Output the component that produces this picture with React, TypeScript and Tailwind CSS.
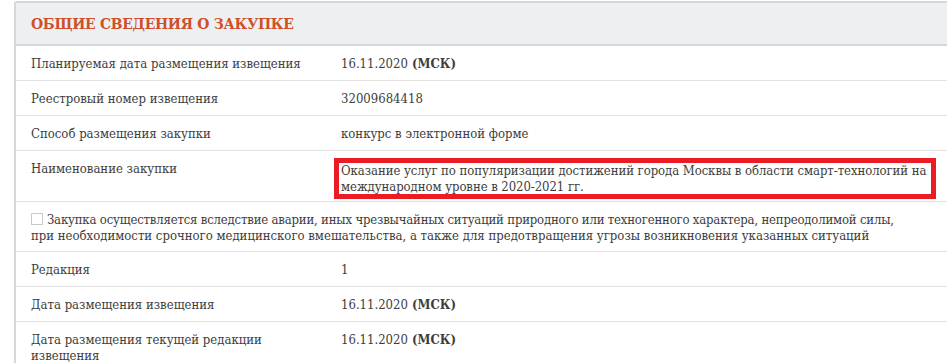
const rows = [
  { label: 'Планируемая дата размещения извещения', value: '16.11.2020', msk: true },
  { label: 'Реестровый номер извещения', value: '32009684418' },
  { label: 'Способ размещения закупки', value: 'конкурс в электронной форме' },
];

const rowsAfter = [
  { label: 'Редакция', value: '1' },
  { label: 'Дата размещения извещения', value: '16.11.2020', msk: true },
  { label: <>Дата размещения текущей редакции<br />извещения</>, value: '16.11.2020', msk: true },
];

function Row({ label, value, msk }: { label: React.ReactNode; value: string; msk?: boolean }) {
  return (
    <div className="flex border-b border-[#e3e3e3] pt-[10px] pb-[8px] leading-[16px]">
      <div className="w-[325px] shrink-0 pl-[15px] pr-[10px]">{label}</div>
      <div className="flex-1">
        {value}
        {msk && <b className="font-bold"> (МСК)</b>}
      </div>
    </div>
  );
}

export default function App() {
  return (
    <div className="w-[947px] h-[363px] overflow-hidden bg-white pt-[1px] pl-[14px]">
      <div
        className="w-[960px] border-t-[2px] border-l-[2px] border-[#d5d7dc] rounded-tl-[3px] text-[13px] text-[#3d3d3d]"
        style={{ fontFamily: '"DejaVu Serif Condensed", "DejaVu Serif", serif' }}
      >
        <div className="bg-[#eeeff1] border-b-[2px] border-[#d5d7dc] h-[43px] flex items-center pl-[15px]">
          <h2 className="text-[15.5px] font-bold uppercase text-[#cf5028] tracking-[-0.3px]">
            Общие сведения о закупке
          </h2>
        </div>

        {rows.map((r, i) => (
          <Row key={i} {...r} />
        ))}

        <div className="flex border-b border-[#e3e3e3] pb-[2px] leading-[16px]">
          <div className="w-[325px] shrink-0 pl-[15px] pr-[10px] pt-[10px]">Наименование закупки</div>
          <div className="flex-1 pt-[7px]">
            <div className="ml-[-7px] w-[602px] border-[5px] border-[#ec1c24] pl-[2px] leading-[15.5px] whitespace-nowrap tracking-[-0.06px]">
              Оказание услуг по популяризации достижений города Москвы в области смарт-технологий на
              <br />
              международном уровне в 2020-2021 гг.
            </div>
          </div>
        </div>

        <div className="border-b border-[#e3e3e3] pt-[10px] pb-[7px] pl-[15px] leading-[16px] whitespace-nowrap">
          <span className="inline-block w-[12px] h-[12px] border border-[#c9c9c9] bg-white align-[-1px] mr-[4px]" />
          <span className="tracking-[-0.18px]">
            Закупка осуществляется вследствие аварии, иных чрезвычайных ситуаций природного или техногенного характера, непреодолимой силы,
          </span>
          <br />
          при необходимости срочного медицинского вмешательства, а также для предотвращения угрозы возникновения указанных ситуаций
        </div>

        {rowsAfter.map((r, i) => (
          <Row key={i} {...r} />
        ))}
      </div>
    </div>
  );
}
